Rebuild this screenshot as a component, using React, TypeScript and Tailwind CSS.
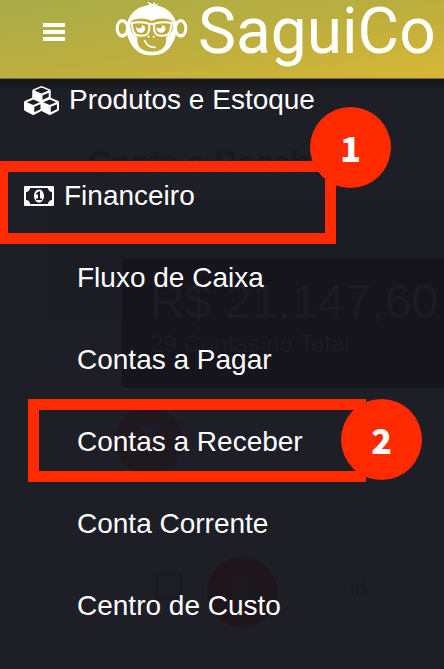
import type { ReactNode } from "react";

function MenuIcon() {
  return (
    <svg viewBox="0 0 22 18" className="h-[18px] w-[22px] fill-current" aria-hidden="true">
      <rect width="22" height="4" />
      <rect y="7" width="22" height="4" />
      <rect y="14" width="22" height="4" />
    </svg>
  );
}

function MonkeyLogo() {
  return (
    <svg viewBox="345 0 219 171" className="h-[57px] w-[73px] shrink-0" role="img" aria-label="Sagui">
      <g fill="#fff">
        <ellipse cx="367" cy="85" rx="20" ry="28" />
        <ellipse cx="542" cy="85" rx="20" ry="28" />
      </g>
      <g fill="#bcae3e">
        <ellipse cx="367" cy="85" rx="11" ry="18" />
        <ellipse cx="542" cy="85" rx="11" ry="18" />
      </g>
      <g fill="#fff">
        <path d="M443 20 C449 16 451 13 440 5 C450 7 455 10 457 13 C459 9 462 7 466 6 C463 10 464 13 465 15 C469 11 472 11 475 11 C469 15 470 18 474 20Z" />
        <path d="M455 15 C496 15 526 43 530 77 C532 107 519 128 508 144 C494 160 476 166 455 166 C434 166 416 160 402 144 C389 128 378 107 380 77 C384 43 414 15 455 15Z" />
      </g>
      <path
        d="M455 64 C441 52 405 53 393 64 C386 83 396 105 412 111 C410 126 414 139 426 148 C443 158 468 158 485 148 C497 139 500 126 498 111 C514 105 524 83 517 64 C505 53 469 52 455 64Z"
        fill="#bcae3e"
      />
      <g fill="none" stroke="#fff" strokeLinecap="round" strokeLinejoin="round">
        <path d="M395 69 Q421 64 448 71 Q450 96 440 104 Q425 111 407 104 Q397 96 395 69Z" strokeWidth="6" />
        <path d="M515 69 Q489 64 462 71 Q460 96 470 104 Q485 111 503 104 Q513 96 515 69Z" strokeWidth="6" />
        <path d="M447 74 Q455 69 463 74" strokeWidth="5" />
        <path d="M434 122 Q443 143 465 142" strokeWidth="5" />
      </g>
      <g fill="#fff">
        <path d="M408 80 Q412 87 419 85 Q427 85 425 75 Q438 78 435 89 Q431 99 421 98 Q408 96 408 80Z" />
        <path d="M469 80 Q473 87 480 85 Q488 85 486 75 Q499 78 496 89 Q492 99 482 98 Q469 96 469 80Z" />
        <circle cx="446" cy="110" r="3" />
        <circle cx="461" cy="110" r="3" />
      </g>
    </svg>
  );
}

function CubesIcon() {
  return (
    <svg viewBox="0 0 2176 1792" className="h-[29px] w-[35px] fill-current" aria-hidden="true">
      <path d="M640 1632l384-192v-314l-384 164v342zM576 1178l404-173-404-173-404 173zM1664 1632l384-192v-314l-384 164v342zM1600 1178l404-173-404-173-404 173zM1152 845l384-165v-266l-384 164v267zM1088 466l441-189-441-189-441 189zM2176 1024v416q0 36-19 67t-52 47l-448 224q-25 14-57 14t-57-14l-448-224q-5-2-7-4-2 2-7 4l-448 224q-25 14-57 14t-57-14l-448-224q-33-16-52-47t-19-67v-416q0-38 21.5-70t56.5-48l434-186v-400q0-38 21.5-70t56.5-48l448-192q23-10 50-10t50 10l448 192q35 16 56.5 48t21.5 70v400l434 186q36 16 57 48t21 70z" />
    </svg>
  );
}

function MoneyIcon() {
  return (
    <svg viewBox="0 0 1920 1280" className="h-[20px] w-[30px] fill-current" aria-hidden="true">
      <path d="M768 896h384v-96h-128v-448h-114l-148 137 77 80q42-37 55-57h2v288h-128v96zM1280 640q0 70-21 142t-59.5 134-101.5 101-138 39-138-39-101.5-101-59.5-134-21-142 21-142 59.5-134 101.5-101 138-39 138 39 101.5 101 59.5 134 21 142zM1792 896v-512q-106 0-181-75t-75-181h-1152q0 106-75 181t-181 75v512q106 0 181 75t75 181h1152q0-106 75-181t181-75zM1920 64v1152q0 26-19 45t-45 19h-1792q-26 0-45-19t-19-45v-1152q0-26 19-45t45-19h1792q26 0 45 19t19 45z" />
    </svg>
  );
}

function StepBadge({ children, className }: { children: ReactNode; className: string }) {
  return (
    <span
      className={`absolute flex size-[81px] items-center justify-center rounded-full bg-[#ff2a00] font-['Noto_Sans_CJK_JP','Noto_Sans',sans-serif] text-[34px] font-black leading-none text-white ${className}`}
    >
      {children}
    </span>
  );
}

// The page that shows faintly through the open menu.
function DimmedPage() {
  return (
    <div aria-hidden="true" className="absolute inset-0 overflow-hidden whitespace-nowrap">
      <div className="flex h-full flex-col pt-[65px]">
        <p className="ml-[88px] text-[32px] font-bold leading-9 text-[#181820]">Conta a Receber</p>
        <div className="ml-12 mt-[18px] h-[121px] shrink-0 border-l border-[#1b1b24] bg-[#1c1c25] pl-[73px] pt-[60px]">
          <div className="h-[130px] rounded-l-md bg-[#16151d] pl-7 pt-4">
            <p className="text-5xl leading-[56px] text-[#1b1c25]">R$ 21.147,60</p>
            <p className="text-2xl leading-7 text-[#1b1c25]">29 Contas no Total</p>
          </div>
        </div>
        <div className="ml-[115px] mt-[88px] flex size-[68px] shrink-0 items-center justify-center rounded-full bg-[#1f181f]">
          <svg viewBox="0 0 24 20" className="mb-3 h-5 w-6 fill-[#1c1d26]">
            <path d="M0 0h24L15 11v9l-6-4v-5z" />
          </svg>
        </div>
        <div className="ml-[107px] mt-[82px] flex h-[82px] shrink-0 border-b border-[#1b1b23] pl-12">
          <div className="mt-4 size-[27px] rounded-xs border-3 border-[#191921]" />
          <div className="ml-[25px] flex size-[70px] items-center justify-center rounded-full bg-[#1f161c] text-[#191a22]">
            <MenuIcon />
          </div>
          <p className="ml-[73px] mt-5 text-xl leading-6 text-[#191921]">Id</p>
        </div>
      </div>
    </div>
  );
}

const linkClass = "relative flex h-full items-center";

export default function App() {
  return (
    <div className="flex min-h-screen flex-col overflow-hidden bg-[#1e1e27] font-['Liberation_Sans',Arial,sans-serif] text-white">
      <header className="flex h-[79px] shrink-0 items-start overflow-hidden border-b border-[#77702b] bg-linear-to-br from-[#a8ac49] via-[#bcae3e] to-[#d8b735] pl-[43px]">
        <button type="button" aria-label="Abrir menu" className="mt-[23px] shrink-0">
          <MenuIcon />
        </button>
        <a href="#inicio" className="ml-[50px] flex items-start gap-[10px]">
          <MonkeyLogo />
          <span className="font-[Roboto,sans-serif] text-[64px] leading-16">SaguiCo</span>
        </a>
      </header>

      <div className="relative flex-1">
        <DimmedPage />
        <div className="absolute inset-x-0 top-0 h-3 bg-linear-to-b from-[#15151a] to-transparent" />
        <nav aria-label="Menu principal" className="relative pt-px text-[28px] leading-8">
          <ul>
            <li className="mb-[35px] h-10 pl-6">
              <a href="#produtos" className={`${linkClass} gap-[10px]`}>
                <CubesIcon />
                Produtos e Estoque
              </a>
            </li>
            <li>
              <div className="relative h-[82px] pl-6">
                <span className="pointer-events-none absolute -left-[3px] top-[6px] h-[83px] w-[339px] border-11 border-[#ff2a00]" />
                <StepBadge className="left-[310px] -top-12">1</StepBadge>
                <a href="#financeiro" className={`${linkClass} gap-[10px]`}>
                  <MoneyIcon />
                  Financeiro
                </a>
              </div>
              <ul>
                <li className="h-[82px] pl-[77px]">
                  <a href="#fluxo" className={linkClass}>Fluxo de Caixa</a>
                </li>
                <li className="h-[82px] pl-[77px]">
                  <a href="#pagar" className={linkClass}>Contas a Pagar</a>
                </li>
                <li className="relative h-[82px] pl-[77px]">
                  <span className="pointer-events-none absolute -top-[2px] left-7 h-[83px] w-[338px] border-11 border-[#ff2a00]" />
                  <StepBadge className="-top-[2px] left-[341px]">2</StepBadge>
                  <a href="#receber" className={linkClass}>Contas a Receber</a>
                </li>
                <li className="h-[82px] pl-[77px]">
                  <a href="#corrente" className={linkClass}>Conta Corrente</a>
                </li>
                <li className="h-[82px] pl-[77px]">
                  <a href="#custo" className={linkClass}>Centro de Custo</a>
                </li>
              </ul>
            </li>
          </ul>
        </nav>
      </div>
    </div>
  );
}
